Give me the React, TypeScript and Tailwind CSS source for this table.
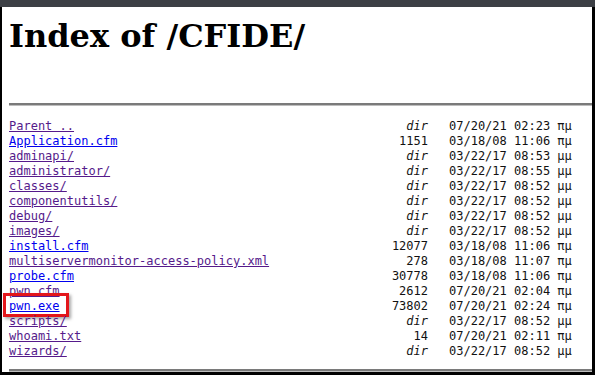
import React from "react";

type Entry = {
  name: string;
  size: string;
  date: string;
  visited: boolean;
};

const entries: Entry[] = [
  { name: "Parent ..", size: "dir", date: "07/20/21 02:23 πμ", visited: true },
  { name: "Application.cfm", size: "1151", date: "03/18/08 11:06 πμ", visited: false },
  { name: "adminapi/", size: "dir", date: "03/22/17 08:53 μμ", visited: true },
  { name: "administrator/", size: "dir", date: "03/22/17 08:55 μμ", visited: true },
  { name: "classes/", size: "dir", date: "03/22/17 08:52 μμ", visited: true },
  { name: "componentutils/", size: "dir", date: "03/22/17 08:52 μμ", visited: true },
  { name: "debug/", size: "dir", date: "03/22/17 08:52 μμ", visited: true },
  { name: "images/", size: "dir", date: "03/22/17 08:52 μμ", visited: true },
  { name: "install.cfm", size: "12077", date: "03/18/08 11:06 πμ", visited: false },
  { name: "multiservermonitor-access-policy.xml", size: "278", date: "03/18/08 11:07 πμ", visited: true },
  { name: "probe.cfm", size: "30778", date: "03/18/08 11:06 πμ", visited: false },
  { name: "pwn.cfm", size: "2612", date: "07/20/21 02:04 πμ", visited: true },
  { name: "pwn.exe", size: "73802", date: "07/20/21 02:24 πμ", visited: false },
  { name: "scripts/", size: "dir", date: "03/22/17 08:52 μμ", visited: true },
  { name: "whoami.txt", size: "14", date: "07/20/21 02:11 πμ", visited: true },
  { name: "wizards/", size: "dir", date: "03/22/17 08:52 μμ", visited: true },
];

export default function App() {
  return (
    <div className="w-[595px] h-[375px] bg-black flex flex-col overflow-hidden">
      {/* window title strip */}
      <div className="h-[7px] w-full bg-[#3c3f45] shrink-0" />
      <div className="flex-1 ml-[2px] mr-[3px] bg-white flex flex-col pl-[7px] overflow-hidden">
        <h1
          className="mt-[13px] text-[32px] leading-[32px] font-bold text-black"
          style={{ fontFamily: '"DejaVu Serif", serif' }}
        >
          Index of /CFIDE/
        </h1>
        <div className="mt-[51px] h-[3px] bg-[#7a7a7a] border-b border-[#bdbdbd] shrink-0" />
        <div
          className="mt-[13px] text-[12px] leading-[15px] text-[#111]"
          style={{ fontFamily: '"DejaVu Sans Mono", monospace' }}
        >
          {entries.map((e) => (
            <div key={e.name} className="flex">
              <div className="relative w-[250px] shrink-0">
                <a
                  href="#"
                  className={`underline whitespace-nowrap ${
                    e.visited ? "text-[#551a8b]" : "text-[#0000ee]"
                  }`}
                >
                  {e.name}
                </a>
                {e.name === "pwn.exe" && (
                  <span className="absolute left-[-6px] top-[-6px] w-[66px] h-[24px] border-[3px] border-[#e3161b] shadow-[2px_2px_3px_rgba(0,0,0,0.35)]" />
                )}
              </div>
              <div
                className={`w-[169px] text-right shrink-0 ${
                  e.size === "dir" ? "italic" : ""
                }`}
              >
                {e.size}
              </div>
              <div className="ml-[21px] whitespace-nowrap">{e.date}</div>
            </div>
          ))}
        </div>
        <div className="mt-[10px] h-[3px] bg-[#7a7a7a] border-b border-[#bdbdbd] shrink-0" />
      </div>
      <div className="h-[3px] shrink-0" />
    </div>
  );
}
